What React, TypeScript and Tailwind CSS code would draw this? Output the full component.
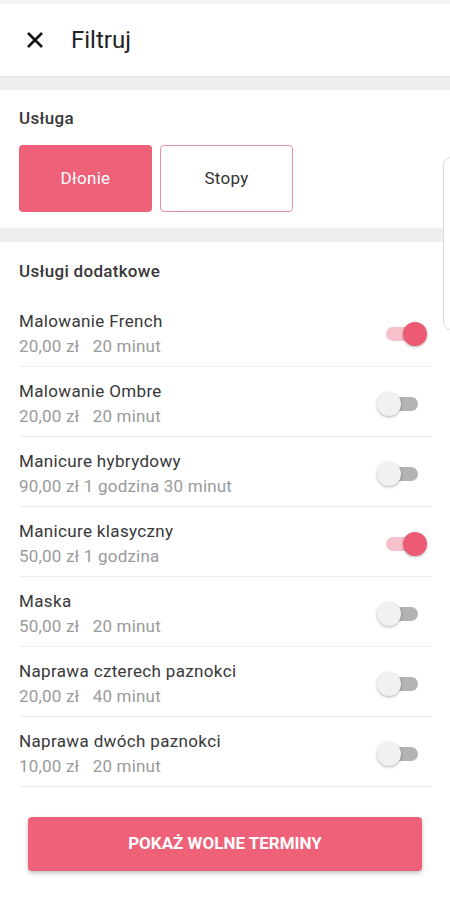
import React, { useState } from "react";

const items = [
  { name: "Malowanie French", info: "20,00 zł   20 minut", on: true },
  { name: "Malowanie Ombre", info: "20,00 zł   20 minut", on: false },
  { name: "Manicure hybrydowy", info: "90,00 zł 1 godzina 30 minut", on: false },
  { name: "Manicure klasyczny", info: "50,00 zł 1 godzina", on: true },
  { name: "Maska", info: "50,00 zł   20 minut", on: false },
  { name: "Naprawa czterech paznokci", info: "20,00 zł   40 minut", on: false },
  { name: "Naprawa dwóch paznokci", info: "10,00 zł   20 minut", on: false },
];

function Switch({ on }: { on: boolean }) {
  return (
    <div className="relative w-[50px] h-[24px] shrink-0">
      <div
        className={
          "absolute left-[9px] top-[5px] w-[32px] h-[14px] rounded-full " +
          (on ? "bg-[#f7c0ca]" : "bg-[#b3b3b3]")
        }
      />
      <div
        className={
          "absolute top-0 w-[24px] h-[24px] rounded-full shadow-[0_1px_3px_rgba(0,0,0,0.3)] " +
          (on ? "left-[26px] bg-[#ec5a73]" : "left-0 bg-[#f1f1f1]")
        }
      />
    </div>
  );
}

export default function App() {
  const [sel] = useState(0);
  return (
    <div
      className="relative w-[450px] h-[900px] bg-white overflow-hidden"
      style={{ fontFamily: "Roboto, 'Noto Sans', sans-serif" }}
    >
      <div className="h-[4px] bg-[#f3f3f3]" />
      <div className="h-[72px] flex items-center">
        <svg className="ml-[25px]" width="20" height="20" viewBox="0 0 20 20">
          <path d="M3 3 L17 17 M17 3 L3 17" stroke="#111" strokeWidth="2.6" strokeLinecap="butt" />
        </svg>
        <span className="ml-[26px] text-[24px] text-[#222] leading-none">Filtruj</span>
      </div>
      <div className="h-[14px] bg-[#eeeeee] border-t border-[#e3e3e3]" />

      <div className="px-[19px] pt-[18px] pb-[16px]">
        <div className="text-[17px] leading-[20px] font-medium text-[#383838] tracking-[0.3px]">Usługa</div>
        <div className="mt-[17px] flex gap-[8px]">
          <div
            className={
              "w-[133px] h-[67px] rounded-[4px] flex items-center justify-center text-[17px] tracking-[0.3px] " +
              (sel === 0 ? "bg-[#ef6178] text-white" : "border border-[#e98d9c] text-[#333]")
            }
          >
            Dłonie
          </div>
          <div className="w-[133px] h-[67px] rounded-[4px] flex items-center justify-center text-[17px] tracking-[0.3px] border border-[#ea8f9e] text-[#333]">
            Stopy
          </div>
        </div>
      </div>
      <div className="h-[14px] bg-[#eeeeee]" />

      <div className="pl-[19px] pr-[18px] pt-[19px]">
        <div className="text-[17px] leading-[20px] font-medium text-[#383838] tracking-[0.3px]">Usługi dodatkowe</div>
        <div className="mt-[16px]">
          {items.map((it) => (
            <div key={it.name} className="flex items-center border-b border-[#ededed] pt-[14px] pb-[10px]">
              <div className="flex-1">
                <div className="text-[17px] leading-[20px] text-[#383838] tracking-[0.35px]">{it.name}</div>
                <div className="mt-[5px] text-[17px] leading-[20px] text-[#9a9a9a] tracking-[0.2px] whitespace-pre">{it.info}</div>
              </div>
              <div className="mr-[5px]">
                <Switch on={it.on} />
              </div>
            </div>
          ))}
        </div>
      </div>

      <div className="px-[28px] mt-[30px]">
        <div className="h-[54px] rounded-[4px] bg-[#ef6178] shadow-[0_2px_4px_rgba(0,0,0,0.25)] flex items-center justify-center text-white text-[17px] font-bold">
          POKAŻ WOLNE TERMINY
        </div>
      </div>

      <div className="absolute left-[443px] top-[157px] w-[20px] h-[173px] rounded-[8px] border border-[#dddddd] bg-white" />
    </div>
  );
}
